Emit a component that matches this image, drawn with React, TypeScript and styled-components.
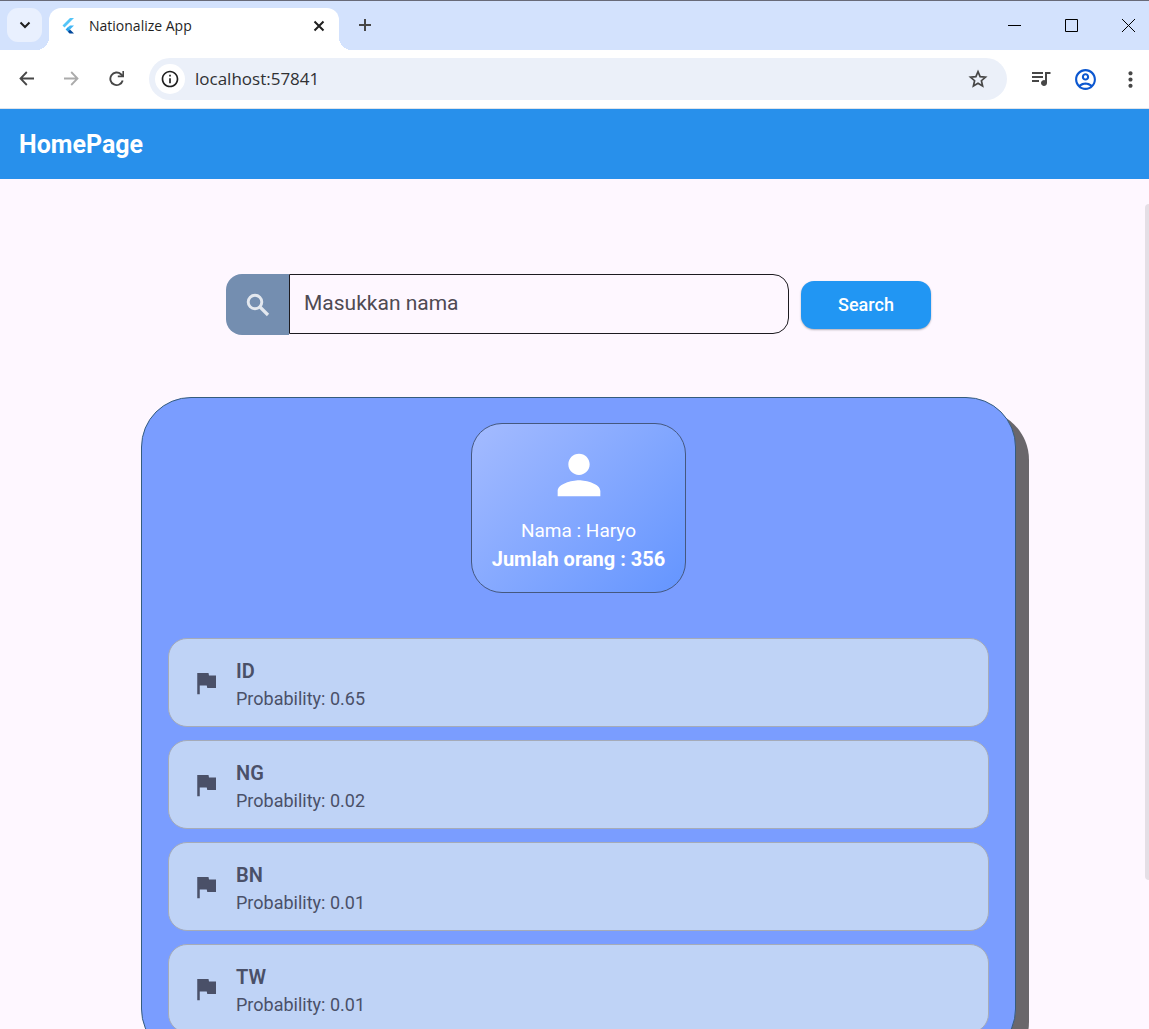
import React from "react";
import styled, { createGlobalStyle } from "styled-components";
import {
  MdFlag,
  MdMoreVert,
  MdOutlineAccountCircle,
  MdOutlineInfo,
  MdPerson,
} from "react-icons/md";

const uiFont = `"Open Sans", "Noto Sans", sans-serif`;
const appFont = `Roboto, "Liberation Sans", sans-serif`;

const GlobalStyle = createGlobalStyle`
  *, *::before, *::after { box-sizing: border-box; }
  html, body { margin: 0; }
  body { font-family: ${appFont}; background: #fef7ff; }
  button, input { font: inherit; }
  h1, h2, p, ul { margin: 0; padding: 0; }
  svg { display: block; flex: none; }
`;

const Window = styled.div`
  display: flex;
  flex-direction: column;
  height: 100vh;
  overflow: hidden;
`;

/* ---------- browser chrome ---------- */

const TabStrip = styled.div`
  display: flex;
  align-items: flex-start;
  flex: none;
  height: 50px;
  padding: 7px 0 0 7px;
  border-top: 1px solid #686a78;
  background: #d3e2fd;
  font-family: ${uiFont};
`;

const TabSearch = styled.button`
  display: grid;
  place-items: center;
  width: 35px;
  height: 34px;
  padding: 0;
  border: 0;
  border-radius: 11px;
  background: #e9f0fe;
`;

const Tab = styled.div`
  position: relative;
  display: flex;
  align-items: center;
  flex: 0 1 290px;
  height: 42px;
  margin-left: 7px;
  padding: 0 10px 6px 12px;
  border-radius: 12px 12px 0 0;
  background: #ffffff;
  color: #1f1f1f;

  &::before,
  &::after {
    content: "";
    position: absolute;
    bottom: 0;
    width: 13px;
    height: 13px;
  }
  &::before {
    right: 100%;
    background: radial-gradient(circle at 0 0, transparent 13px, #ffffff 13px);
  }
  &::after {
    left: 100%;
    background: radial-gradient(circle at 100% 0, transparent 13px, #ffffff 13px);
  }
`;

const TabTitle = styled.span`
  flex: 1;
  margin-left: 12px;
  font-size: 14px;
  line-height: 20px;
  white-space: nowrap;
  overflow: hidden;
`;

const PlainButton = styled.button<{ $w?: number }>`
  display: grid;
  place-items: center;
  flex: none;
  width: ${({ $w = 20 }) => $w}px;
  height: 34px;
  padding: 0;
  border: 0;
  background: transparent;
  color: #474747;
`;

const NewTab = styled(PlainButton)`
  margin-left: 16px;
`;

const WindowControls = styled.div`
  display: flex;
  margin-left: auto;
  margin-right: -8px;
`;

const Toolbar = styled.div`
  display: flex;
  align-items: center;
  flex: none;
  height: 59px;
  padding: 0 6px 0 17px;
  border-bottom: 1px solid #dfe3ea;
  background: #ffffff;
  color: #474747;
  font-family: ${uiFont};
`;

const NavButtons = styled.div`
  display: flex;
  gap: 25px;
  margin-right: 22px;
`;

const AddressBar = styled.label`
  display: flex;
  align-items: center;
  flex: 1;
  min-width: 0;
  height: 42px;
  padding: 0 18px 0 6px;
  border-radius: 21px;
  background: #ebf0f9;
`;

const SiteInfo = styled.span`
  display: grid;
  place-items: center;
  flex: none;
  width: 30px;
  height: 30px;
  border-radius: 50%;
  background: #ffffff;
  color: #1f1f1f;
`;

const AddressInput = styled.input`
  flex: 1;
  min-width: 0;
  margin-left: 10px;
  padding: 0;
  border: 0;
  outline: 0;
  background: transparent;
  color: #303134;
  font-size: 17px;
  line-height: 24px;
`;

const Extras = styled.div`
  display: flex;
  gap: 20px;
  margin-left: 21px;
`;

/* ---------- page ---------- */

const AppBar = styled.header`
  flex: none;
  padding: 18px 19px 17px;
  background: #2890eb;
  color: #ffffff;
`;

const AppTitle = styled.h1`
  font-size: 25px;
  font-weight: 700;
  line-height: 35px;
`;

const Viewport = styled.div`
  position: relative;
  flex: 1;
  min-height: 0;
`;

const Content = styled.main`
  display: flex;
  flex-direction: column;
  align-items: center;
  gap: 62px;
  height: 100%;
  padding: 95px 0 0 8px;
  overflow-y: auto;
  scrollbar-width: none;
  background: #fef7ff;
`;

const ScrollThumb = styled.div`
  position: absolute;
  top: 25px;
  right: 0;
  width: 4px;
  height: calc(100% - 174px);
  border-radius: 4px 0 0 4px;
  background: #e5dfe6;
`;

const SearchForm = styled.form`
  display: flex;
  align-items: center;
  flex: none;
  width: 100%;
  max-width: 705px;
`;

const SearchField = styled.label`
  display: flex;
  align-items: flex-start;
  flex: 1;
  min-width: 0;
`;

const SearchIcon = styled.span`
  display: grid;
  place-items: center;
  flex: none;
  width: 63px;
  height: 61px;
  border-radius: 16px 0 0 16px;
  background: #748eb0;
  color: #e3e8ef;
`;

const NameInput = styled.input`
  flex: 1;
  min-width: 0;
  height: 60px;
  padding: 0 14px 2px;
  border: 1px solid #1d1b20;
  border-radius: 0 16px 16px 0;
  outline: 0;
  background: transparent;
  color: #1d1b20;
  font-size: 21px;

  &::placeholder {
    color: #4f4a53;
    opacity: 1;
  }
`;

const SearchButton = styled.button`
  width: 130px;
  height: 48px;
  margin-left: 12px;
  border: 0;
  border-radius: 13px;
  background: #2196f3;
  box-shadow: 0 1px 2px rgba(0, 0, 0, 0.3);
  color: #ffffff;
  font-size: 18px;
  font-weight: 500;
`;

const Panel = styled.section`
  display: flex;
  flex-direction: column;
  align-items: center;
  gap: 45px;
  flex: none;
  width: 100%;
  max-width: 875px;
  padding: 25px 26px;
  border: 1px solid #355c7d;
  border-radius: 50px;
  background: #7a9dff;
  box-shadow: 13px 13px 0 #6a676b;
`;

const Profile = styled.div`
  display: flex;
  flex-direction: column;
  align-items: center;
  padding: 19px 20px;
  border: 1px solid #45587f;
  border-radius: 31px;
  background: linear-gradient(135deg, #a4bbff, #6495ff);
  color: #ffffff;
`;

const ProfileName = styled.p`
  margin-top: 10px;
  font-size: 19px;
  line-height: 28px;
`;

const ProfileCount = styled.h2`
  font-size: 20px;
  font-weight: 700;
  line-height: 28px;
`;

const CountryList = styled.ul`
  display: flex;
  flex-direction: column;
  gap: 13px;
  width: 100%;
  list-style: none;
`;

const CountryItem = styled.li`
  display: flex;
  align-items: center;
  gap: 15px;
  height: 89px;
  padding: 0 22px;
  border: 1px solid #a5abb8;
  border-radius: 19px;
  background: #bfd3f6;
  color: #4a5068;
`;

const CountryText = styled.div`
  padding-top: 4px;
`;

const CountryCode = styled.p`
  font-size: 20px;
  font-weight: 600;
  line-height: 28px;
`;

const Probability = styled.p`
  font-size: 18px;
  line-height: 28px;
`;

const countries = [
  { code: "ID", probability: "0.65" },
  { code: "NG", probability: "0.02" },
  { code: "BN", probability: "0.01" },
  { code: "TW", probability: "0.01" },
];

const stroke = { fill: "none", stroke: "currentColor", strokeWidth: 2 };

const FlutterLogo = () => (
  <svg width="16" height="18" viewBox="0 0 16 18" aria-hidden="true">
    <path d="M9 1h4L3.500 10.500 1.500 8.500z" fill="#54c5f8" />
    <path d="M9 8.500h4L9 12.500 6.500 10.500z" fill="#40b6f5" />
    <path d="M6.800 10.300L9 12.500 7 14.700 4.600 12.500z" fill="#29a3ec" />
    <path d="M6.800 14.700L9 12.500 13 16.500H8.600z" fill="#01479b" />
  </svg>
);

const StarIcon = () => (
  <svg width="20" height="20" viewBox="0 0 20 20" aria-hidden="true">
    <path
      d="M10 2.600l2.100 5 5.400.5-4.100 3.600 1.200 5.300L10 14.200 5.400 17l1.200-5.300L2.500 8.100l5.400-.5z"
      {...stroke}
      strokeWidth={1.7}
    />
  </svg>
);

const QueueIcon = () => (
  <svg width="20" height="16" viewBox="0 0 20 16" aria-hidden="true">
    <path d="M1 2h11M1 6h11M1 10h7" {...stroke} strokeWidth={1.9} />
    <path d="M14 1h5.500v2H16v9a3 3 0 1 1-2-2.800z" fill="currentColor" />
  </svg>
);

const MagnifierIcon = () => (
  <svg width="24" height="24" viewBox="0 0 24 24" aria-hidden="true">
    <circle cx="9" cy="9" r="6.800" {...stroke} strokeWidth={2.900} />
    <path d="M14 14l8 8" {...stroke} strokeWidth={3.200} />
  </svg>
);

export default function App() {
  return (
    <Window>
      <GlobalStyle />
      <TabStrip>
        <TabSearch aria-label="Search tabs">
          <svg width="12" height="8" viewBox="0 0 12 8">
            <path d="M1.500 1.500L6 6l4.500-4.500" {...stroke} stroke="#1f1f1f" />
          </svg>
        </TabSearch>
        <Tab>
          <FlutterLogo />
          <TabTitle>Nationalize App</TabTitle>
          <PlainButton aria-label="Close tab">
            <svg width="12" height="12" viewBox="0 0 12 12">
              <path d="M1.500 1.500l9 9M10.500 1.500l-9 9" {...stroke} stroke="#1f1f1f" />
            </svg>
          </PlainButton>
        </Tab>
        <NewTab aria-label="New tab">
          <svg width="14" height="14" viewBox="0 0 14 14">
            <path d="M7 1v12M1 7h12" {...stroke} />
          </svg>
        </NewTab>
        <WindowControls>
          <PlainButton $w={57} aria-label="Minimize">
            <svg width="13" height="13" viewBox="0 0 13 13">
              <path d="M0 6.500h13" {...stroke} stroke="#000" strokeWidth={1} />
            </svg>
          </PlainButton>
          <PlainButton $w={57} aria-label="Maximize">
            <svg width="13" height="13" viewBox="0 0 13 13">
              <path d="M.5.5h12v12H.5z" {...stroke} stroke="#000" strokeWidth={1} />
            </svg>
          </PlainButton>
          <PlainButton $w={57} aria-label="Close window">
            <svg width="13" height="13" viewBox="0 0 13 13">
              <path d="M0 0l13 13M13 0L0 13" {...stroke} stroke="#000" strokeWidth={1} />
            </svg>
          </PlainButton>
        </WindowControls>
      </TabStrip>
      <Toolbar>
        <NavButtons>
          <PlainButton aria-label="Back">
            <svg width="16" height="16" viewBox="0 0 16 16">
              <path d="M15 7.500H2M7.800 1L1.500 7.500 7.800 14" {...stroke} strokeWidth={1.8} />
            </svg>
          </PlainButton>
          <PlainButton aria-label="Forward" disabled>
            <svg width="16" height="16" viewBox="0 0 16 16">
              <path d="M0 7.500h13M7.200 1l6.300 6.500L7.200 14" {...stroke} stroke="#ababab" strokeWidth={1.8} />
            </svg>
          </PlainButton>
          <PlainButton aria-label="Reload">
            <svg width="16" height="16" viewBox="0 0 16 16">
              <path d="M13.700 9.500A6.300 6.300 0 1 1 12 3.200L14 5" {...stroke} strokeWidth={1.9} />
              <path d="M15 0v6.200H8.800V4.500h4.600V0z" fill="currentColor" />
            </svg>
          </PlainButton>
        </NavButtons>
        <AddressBar>
          <SiteInfo>
            <MdOutlineInfo size={20} />
          </SiteInfo>
          <AddressInput aria-label="Address" defaultValue="localhost:57841" />
          <PlainButton $w={22} aria-label="Bookmark this tab">
            <StarIcon />
          </PlainButton>
        </AddressBar>
        <Extras>
          <PlainButton $w={25} aria-label="Media">
            <QueueIcon />
          </PlainButton>
          <PlainButton $w={25} aria-label="Profile">
            <MdOutlineAccountCircle size={25} color="#0b57d0" />
          </PlainButton>
          <PlainButton $w={25} aria-label="Menu">
            <MdMoreVert size={25} />
          </PlainButton>
        </Extras>
      </Toolbar>

      <AppBar>
        <AppTitle>HomePage</AppTitle>
      </AppBar>
      <Viewport>
        <Content>
          <SearchForm onSubmit={(e) => e.preventDefault()}>
            <SearchField>
              <SearchIcon>
                <MagnifierIcon />
              </SearchIcon>
              <NameInput aria-label="Masukkan nama" placeholder="Masukkan nama" />
            </SearchField>
            <SearchButton type="submit">Search</SearchButton>
          </SearchForm>
          <Panel>
            <Profile>
              <MdPerson size={64} />
              <ProfileName>Nama : Haryo</ProfileName>
              <ProfileCount>Jumlah orang : 356</ProfileCount>
            </Profile>
            <CountryList>
              {countries.map((c) => (
                <CountryItem key={c.code}>
                  <MdFlag size={30} />
                  <CountryText>
                    <CountryCode>{c.code}</CountryCode>
                    <Probability>Probability: {c.probability}</Probability>
                  </CountryText>
                </CountryItem>
              ))}
            </CountryList>
          </Panel>
        </Content>
        <ScrollThumb />
      </Viewport>
    </Window>
  );
}
